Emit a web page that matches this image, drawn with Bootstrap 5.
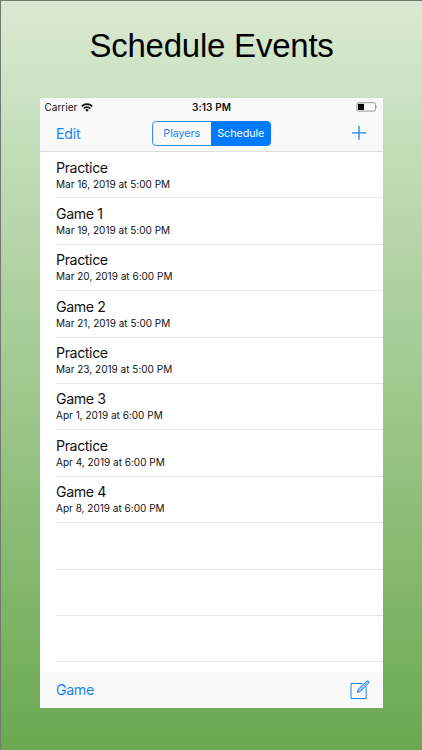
<!DOCTYPE html>
<html lang="en">
<head>
<meta charset="utf-8">
<meta name="viewport" content="width=device-width, initial-scale=1">
<title>Schedule Events</title>
<link href="https://cdn.jsdelivr.net/npm/bootstrap@5.3.0/dist/css/bootstrap.min.css" rel="stylesheet">
<style>
  body { font-family: Inter, "Liberation Sans", sans-serif; color: #111; }
  .poster { height: 750px; background: linear-gradient(#d9ead3, #6aa84f); border-top: 1px solid #6f7b6c; border-left: 1px solid #6f7b6c; }
  .headline { font: 400 33px/40px "Liberation Sans", Arial, sans-serif; letter-spacing: -.23px; color: #000; padding-top: 25px; height: 97px; }
  .phone { width: 343px; height: 610px; margin-left: 38.5px; }
  .chrome { background: #f9f9f9; }
  .top-area { height: 54px; border-bottom: 1px solid #dcdcde; }
  .status { height: 18px; font-size: 10px; line-height: 18px; padding: 0 5px; }
  .side { flex: 1 1 0; }
  .clock { font-weight: 600; letter-spacing: .12px; padding-left: 1px; }
  .toolbar-row { height: 34px; padding: 0 16px 0 16.5px; }
  .ios-link { color: #1b82f1; font-size: 14.2px; line-height: 20px; letter-spacing: -.35px; text-decoration: none; }
  .edit-link { letter-spacing: -.2px; }
  .segments { width: 119px; height: 25px; }
  .segments .btn { --bs-btn-padding-x: 0; --bs-btn-padding-y: 0; --bs-btn-font-size: 10.8px; --bs-btn-line-height: 23px; --bs-btn-border-radius: 4px; --bs-btn-color: #1b82f1; --bs-btn-border-color: #2f8df5; --bs-btn-active-color: #fff; --bs-btn-active-bg: #007aff; --bs-btn-active-border-color: #007aff; width: 50%; letter-spacing: -.08px; }
  .events { height: 520px; }
  .event-row { height: 46.4px; margin-left: 16.5px; padding-top: 5.5px; border-bottom: 1px solid #e6e6e8; }
  .event-name { font-size: 14.2px; line-height: 20px; letter-spacing: -.4px; }
  .event-date { font-size: 10px; line-height: 12px; letter-spacing: .01px; }
  .bottom-bar { height: 36px; padding: 0 13px 0 16.5px; }
</style>
</head>
<body>
<main class="poster overflow-hidden">
  <h1 class="headline text-center m-0">Schedule Events</h1>
  <section class="phone d-flex flex-column bg-white overflow-hidden">
    <header class="chrome top-area flex-shrink-0">
      <div class="status d-flex align-items-center">
        <div class="side d-flex align-items-center gap-1"><span>Carrier</span>
          <svg width="12" height="9" viewBox="0 0 12 9" fill="none" stroke="#111" stroke-width="1.7"><path d="M.7 3.4a7.5 7.5 0 0 1 10.6 0M2.6 5.5a4.8 4.8 0 0 1 6.8 0"/><path d="M6 8.7 4.2 6.9a2.5 2.5 0 0 1 3.6 0Z" fill="#111" stroke="none"/></svg>
        </div>
        <span class="clock">3:13 PM</span>
        <div class="side d-flex justify-content-end">
          <svg width="22" height="10" viewBox="0 0 22 10"><rect x=".9" y=".7" width="18.6" height="8.4" rx="1.8" fill="none" stroke="#999"/><rect x="2" y="1.9" width="6" height="6" fill="#000"/><path d="M20.5 3.3q1.4 1.5 0 3Z" fill="#888"/></svg>
        </div>
      </div>
      <nav class="toolbar-row d-flex align-items-center">
        <div class="side"><a class="ios-link edit-link" href="#">Edit</a></div>
        <div class="segments btn-group">
          <button type="button" class="btn">Players</button>
          <button type="button" class="btn active">Schedule</button>
        </div>
        <div class="side d-flex justify-content-end">
          <svg width="16" height="16" viewBox="0 0 16 16" stroke="#1b82f1" stroke-width="1.3"><path d="M8 .8v14M1 7.8h14"/></svg>
        </div>
      </nav>
    </header>
    <div class="events flex-shrink-0 overflow-hidden">
      <div class="event-row"><div class="event-name">Practice</div><div class="event-date">Mar 16, 2019 at 5:00 PM</div></div>
      <div class="event-row"><div class="event-name">Game 1</div><div class="event-date">Mar 19, 2019 at 5:00 PM</div></div>
      <div class="event-row"><div class="event-name">Practice</div><div class="event-date">Mar 20, 2019 at 6:00 PM</div></div>
      <div class="event-row"><div class="event-name">Game 2</div><div class="event-date">Mar 21, 2019 at 5:00 PM</div></div>
      <div class="event-row"><div class="event-name">Practice</div><div class="event-date">Mar 23, 2019 at 5:00 PM</div></div>
      <div class="event-row"><div class="event-name">Game 3</div><div class="event-date">Apr 1, 2019 at 6:00 PM</div></div>
      <div class="event-row"><div class="event-name">Practice</div><div class="event-date">Apr 4, 2019 at 6:00 PM</div></div>
      <div class="event-row"><div class="event-name">Game 4</div><div class="event-date">Apr 8, 2019 at 6:00 PM</div></div>
      <div class="event-row"></div>
      <div class="event-row"></div>
      <div class="event-row"></div>
    </div>
    <footer class="chrome bottom-bar d-flex align-items-center justify-content-between flex-shrink-0">
      <a class="ios-link" href="#">Game</a>
      <svg width="20" height="20" viewBox="0 0 20 20" fill="none" stroke="#1b82f1"><path d="M12.3 3.5H1v15h15.2V7.2"/><path d="m7.4 12.5.9-3.2 8.5-8.2q1-.7 1.9.2t.1 1.8l-8.5 8.4Z" fill="#9cc9fa"/></svg>
    </footer>
  </section>
</main>
<script src="https://cdn.jsdelivr.net/npm/bootstrap@5.3.0/dist/js/bootstrap.bundle.min.js"></script>
</body>
</html>
